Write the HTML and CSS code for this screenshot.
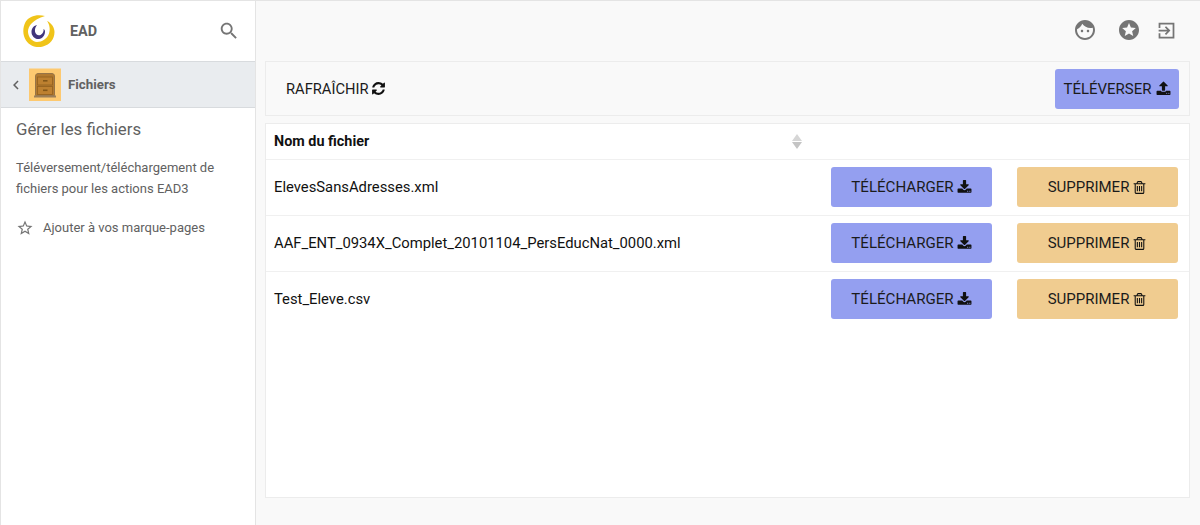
FILE: index.html
```html
<!DOCTYPE html>
<html lang="fr">
<head>
<meta charset="utf-8">
<title>Fichiers</title>
<link rel="stylesheet" href="styles.css">
</head>
<body>
<div class="app">
  <aside class="sidebar">
    <div class="brand">
      <svg class="logo" viewBox="0 0 32 32">
        <path d="M22 1C14 -1 6 1 2.500 7 -.5 12.500 -.5 20 3 25.500 7 31.500 14 33 20 31.500 27 29.500 31.500 24 31.500 17 31.500 12.500 28.500 8 24 6 26.500 9.500 27.500 14 26 18.500 24 24 19 27 14 27 9 26.500 5.500 22.500 5 17 5 11 9.500 5 22 1Z" fill="#f0c419"/>
        <path d="M14 10C10 11 8.500 14 8.500 17 8.500 21 12 24.500 16 24 19.500 23.500 22 20.500 22 16.500 22 15.500 21.500 14.500 20.500 14 21 16 20 18.500 17.500 20 15 21 12.500 19.500 12 16.500 11.700 14 12.500 12 14 10Z" fill="#41357c"/>
      </svg>
      <span class="brand-name">EAD</span>
      <svg class="search" viewBox="0 0 24 24"><path d="M15.5 14h-.79l-.28-.27C15.41 12.59 16 11.11 16 9.5 16 5.91 13.09 3 9.5 3S3 5.91 3 9.5 5.91 16 9.5 16c1.61 0 3.09-.59 4.23-1.57l.27.28v.79l5 4.99L20.49 19l-4.99-5zm-6 0C7.01 14 5 11.99 5 9.5S7.01 5 9.5 5 14 7.01 14 9.5 11.99 14 9.5 14z"/></svg>
    </div>
    <div class="crumb">
      <svg class="back" viewBox="0 0 24 24"><path d="M15.41 7.41L14 6l-6 6 6 6 1.41-1.41L10.83 12z"/></svg>
      <svg class="cabinet" viewBox="0 0 32 32">
        <rect width="32" height="33" fill="#fdc970"/>
        <path d="M6.500 7Q7 5 9 5H23Q25 5 25.500 7V27H6.500Z" fill="#b27a30" stroke="#977447" stroke-width="1"/>
        <rect x="5" y="27" width="22" height="2" fill="#9c7f58"/>
        <rect x="8.500" y="8.500" width="15" height="8" fill="#bd8030" stroke="#92601f" stroke-width=".8"/>
        <rect x="8.500" y="18" width="15" height="8" fill="#bd8030" stroke="#92601f" stroke-width=".8"/>
        <rect x="14" y="11.500" width="4.500" height="1.600" fill="#835618"/>
        <rect x="14" y="21" width="4.500" height="1.600" fill="#835618"/>
      </svg>
      <span class="crumb-label">Fichiers</span>
    </div>
    <div class="about">
      <h1 class="about-title">Gérer les fichiers</h1>
      <p class="about-text">Téléversement/téléchargement de fichiers pour les actions EAD3</p>
      <div class="bookmark">
        <svg class="star" viewBox="0 0 24 24"><path d="M22 9.24l-7.19-.62L12 2 9.19 8.63 2 9.24l5.46 4.73L5.820 21 12 17.27 18.18 21l-1.63-7.03L22 9.24zM12 15.4l-3.76 2.27 1-4.28-3.32-2.88 4.38-.38L12 6.1l1.71 4.04 4.38.38-3.32 2.88 1 4.28L12 15.4z"/></svg>
        <span>Ajouter à vos marque-pages</span>
      </div>
    </div>
  </aside>
  <main class="main">
    <div class="topbar">
      <svg class="top-icon" viewBox="0 0 24 24"><path d="M9 11.75c-.69 0-1.25.56-1.25 1.25s.56 1.25 1.25 1.25 1.25-.56 1.25-1.25-.56-1.25-1.25-1.25zm6 0c-.69 0-1.25.56-1.25 1.25s.56 1.25 1.25 1.25 1.25-.56 1.25-1.25-.56-1.25-1.25-1.25zM12 2C6.48 2 2 6.48 2 12s4.48 10 10 10 10-4.48 10-10S17.52 2 12 2zm0 18c-4.41 0-8-3.59-8-8 0-.29.02-.58.05-.86 2.36-1.05 4.23-2.98 5.21-5.37C11.07 8.33 14.05 10 17.42 10c.78 0 1.53-.09 2.25-.26.21.71.33 1.47.33 2.26 0 4.41-3.59 8-8 8z"/></svg>
      <svg class="top-icon" viewBox="0 0 24 24"><path d="M11.99 2C6.47 2 2 6.48 2 12s4.47 10 9.99 10C17.52 22 22 17.52 22 12S17.52 2 11.99 2zm4.24 16L12 15.45 7.77 18l1.12-4.81-3.730-3.23 4.92-.42L12 5l1.92 4.53 4.92.42-3.73 3.23L16.23 18z"/></svg>
      <svg class="exit-icon" viewBox="0 0 24 24"><path d="M10.09 15.59L11.5 17l5-5-5-5-1.41 1.41L12.67 11H3v2h9.67l-2.58 2.59zM21 3H3v6h2V5h14v14H5v-4H3v6h18V3z"/></svg>
    </div>
    <div class="toolbar">
      <button class="btn btn-plain">RAFRAÎCHIR <svg class="fa" viewBox="0 0 1792 1792"><path d="M1639 1056q0 5-1 7-64 268-268 434.5t-478 166.5q-146 0-282.5-55t-243.5-157l-129 129q-19 19-45 19t-45-19-19-45v-448q0-26 19-45t45-19h448q26 0 45 19t19 45-19 45l-137 137q71 66 161 102t187 36q134 0 250-65t186-179q11-17 53-117 8-23 30-23h192q13 0 22.5 9.5t9.5 22.5zm25-800v448q0 26-19 45t-45 19h-448q-26 0-45-19t-19-45 19-45l138-138q-148-137-349-137-134 0-250 65t-186 179q-11 17-53 117-8 23-30 23h-199q-13 0-22.5-9.5t-9.5-22.5v-7q65-268 270-434.5t480-166.5q146 0 284 55.5t245 156.5l130-129q19-19 45-19t45 19 19 45z"/></svg></button>
      <button class="btn btn-blue btn-upload">TÉLÉVERSER <svg class="fa" viewBox="0 0 1792 1792"><path d="M1344 1472q0-26-19-45t-45-19-45 19-19 45 19 45 45 19 45-19 19-45zm256 0q0-26-19-45t-45-19-45 19-19 45 19 45 45 19 45-19 19-45zm128-224v320q0 40-28 68t-68 28h-1472q-40 0-68-28t-28-68v-320q0-40 28-68t68-28h427q21 56 70.5 92t110.5 36h256q61 0 110.5-36t70.5-92h427q40 0 68 28t28 68zm-325-648q-17 40-59 40h-256v448q0 26-19 45t-45 19h-256q-26 0-45-19t-19-45v-448h-256q-42 0-59-40-17-39 14-69l448-448q18-19 45-19t45 19l448 448q31 30 14 69z"/></svg></button>
    </div>
    <div class="panel">
      <div class="row row-head">
        <span class="col-name">Nom du fichier</span>
        <span class="sort"><i class="sort-up"></i><i class="sort-down"></i></span>
      </div>
      <div class="row">
        <span class="col-name">ElevesSansAdresses.xml</span>
        <button class="btn btn-blue btn-get">TÉLÉCHARGER <svg class="fa" viewBox="0 0 1792 1792"><path d="M1344 1344q0-26-19-45t-45-19-45 19-19 45 19 45 45 19 45-19 19-45zm256 0q0-26-19-45t-45-19-45 19-19 45 19 45 45 19 45-19 19-45zm128-224v320q0 40-28 68t-68 28h-1472q-40 0-68-28t-28-68v-320q0-40 28-68t68-28h465l135 136q58 56 136 56t136-56l136-136h464q40 0 68 28t28 68zm-325-569q17 41-14 70l-448 448q-18 19-45 19t-45-19l-448-448q-31-29-14-70 17-39 59-39h256v-448q0-26 19-45t45-19h256q26 0 45 19t19 45v448h256q42 0 59 39z"/></svg></button>
        <button class="btn btn-orange btn-del">SUPPRIMER <svg class="fa" viewBox="0 0 1792 1792"><path d="M704 736v576q0 14-9 23t-23 9h-64q-14 0-23-9t-9-23v-576q0-14 9-23t23-9h64q14 0 23 9t9 23zm256 0v576q0 14-9 23t-23 9h-64q-14 0-23-9t-9-23v-576q0-14 9-23t23-9h64q14 0 23 9t9 23zm256 0v576q0 14-9 23t-23 9h-64q-14 0-23-9t-9-23v-576q0-14 9-23t23-9h64q14 0 23 9t9 23zm128 724v-948h-896v948q0 22 7 40.5t14.5 27 10.5 8.5h832q3 0 10.5-8.5t14.5-27 7-40.5zm-672-1076h448l-48-117q-7-9-17-11h-317q-10 2-17 11zm928 32v64q0 14-9 23t-23 9h-96v948q0 83-47 143.5t-113 60.5h-832q-66 0-113-58.5t-47-141.5v-952h-96q-14 0-23-9t-9-23v-64q0-14 9-23t23-9h309l70-167q15-37 54-63t79-26h320q40 0 79 26t54 63l70 167h309q14 0 23 9t9 23z"/></svg></button>
      </div>
      <div class="row">
        <span class="col-name">AAF_ENT_0934X_Complet_20101104_PersEducNat_0000.xml</span>
        <button class="btn btn-blue btn-get">TÉLÉCHARGER <svg class="fa" viewBox="0 0 1792 1792"><path d="M1344 1344q0-26-19-45t-45-19-45 19-19 45 19 45 45 19 45-19 19-45zm256 0q0-26-19-45t-45-19-45 19-19 45 19 45 45 19 45-19 19-45zm128-224v320q0 40-28 68t-68 28h-1472q-40 0-68-28t-28-68v-320q0-40 28-68t68-28h465l135 136q58 56 136 56t136-56l136-136h464q40 0 68 28t28 68zm-325-569q17 41-14 70l-448 448q-18 19-45 19t-45-19l-448-448q-31-29-14-70 17-39 59-39h256v-448q0-26 19-45t45-19h256q26 0 45 19t19 45v448h256q42 0 59 39z"/></svg></button>
        <button class="btn btn-orange btn-del">SUPPRIMER <svg class="fa" viewBox="0 0 1792 1792"><path d="M704 736v576q0 14-9 23t-23 9h-64q-14 0-23-9t-9-23v-576q0-14 9-23t23-9h64q14 0 23 9t9 23zm256 0v576q0 14-9 23t-23 9h-64q-14 0-23-9t-9-23v-576q0-14 9-23t23-9h64q14 0 23 9t9 23zm256 0v576q0 14-9 23t-23 9h-64q-14 0-23-9t-9-23v-576q0-14 9-23t23-9h64q14 0 23 9t9 23zm128 724v-948h-896v948q0 22 7 40.5t14.5 27 10.5 8.5h832q3 0 10.5-8.5t14.5-27 7-40.5zm-672-1076h448l-48-117q-7-9-17-11h-317q-10 2-17 11zm928 32v64q0 14-9 23t-23 9h-96v948q0 83-47 143.5t-113 60.5h-832q-66 0-113-58.5t-47-141.5v-952h-96q-14 0-23-9t-9-23v-64q0-14 9-23t23-9h309l70-167q15-37 54-63t79-26h320q40 0 79 26t54 63l70 167h309q14 0 23 9t9 23z"/></svg></button>
      </div>
      <div class="row">
        <span class="col-name">Test_Eleve.csv</span>
        <button class="btn btn-blue btn-get">TÉLÉCHARGER <svg class="fa" viewBox="0 0 1792 1792"><path d="M1344 1344q0-26-19-45t-45-19-45 19-19 45 19 45 45 19 45-19 19-45zm256 0q0-26-19-45t-45-19-45 19-19 45 19 45 45 19 45-19 19-45zm128-224v320q0 40-28 68t-68 28h-1472q-40 0-68-28t-28-68v-320q0-40 28-68t68-28h465l135 136q58 56 136 56t136-56l136-136h464q40 0 68 28t28 68zm-325-569q17 41-14 70l-448 448q-18 19-45 19t-45-19l-448-448q-31-29-14-70 17-39 59-39h256v-448q0-26 19-45t45-19h256q26 0 45 19t19 45v448h256q42 0 59 39z"/></svg></button>
        <button class="btn btn-orange btn-del">SUPPRIMER <svg class="fa" viewBox="0 0 1792 1792"><path d="M704 736v576q0 14-9 23t-23 9h-64q-14 0-23-9t-9-23v-576q0-14 9-23t23-9h64q14 0 23 9t9 23zm256 0v576q0 14-9 23t-23 9h-64q-14 0-23-9t-9-23v-576q0-14 9-23t23-9h64q14 0 23 9t9 23zm256 0v576q0 14-9 23t-23 9h-64q-14 0-23-9t-9-23v-576q0-14 9-23t23-9h64q14 0 23 9t9 23zm128 724v-948h-896v948q0 22 7 40.5t14.5 27 10.5 8.5h832q3 0 10.5-8.5t14.5-27 7-40.5zm-672-1076h448l-48-117q-7-9-17-11h-317q-10 2-17 11zm928 32v64q0 14-9 23t-23 9h-96v948q0 83-47 143.5t-113 60.5h-832q-66 0-113-58.5t-47-141.5v-952h-96q-14 0-23-9t-9-23v-64q0-14 9-23t23-9h309l70-167q15-37 54-63t79-26h320q40 0 79 26t54 63l70 167h309q14 0 23 9t9 23z"/></svg></button>
      </div>
    </div>
  </main>
</div>
</body>
</html>
```
FILE: styles.css
```css
* { box-sizing: border-box; }
html, body { margin: 0; height: 100%; }
body {
  font-family: Roboto, "Liberation Sans", sans-serif;
  color: #111;
  overflow: hidden;
}
.app {
  display: flex;
  height: 525px;
  border-top: 1px solid #e4e4e4;
  border-left: 1px solid #e4e4e4;
}
.sidebar {
  width: 255px;
  flex: none;
  background: #fff;
  border-right: 1px solid #e4e4e4;
}
.brand {
  height: 60px;
  display: flex;
  align-items: center;
  padding: 0 15px 0 22px;
}
.logo { width: 32px; height: 32px; flex: none; overflow: visible; }
.brand-name {
  margin-left: 15px;
  font-size: 14.400px;
  font-weight: 700;
  color: #616161;
  flex: 1;
}
.search { width: 22px; height: 22px; fill: #757575; }
.crumb {
  height: 47px;
  display: flex;
  align-items: center;
  background: #e9ecef;
  border-top: 1px solid #d8dbde;
  border-bottom: 1px solid #d8dbde;
  padding-left: 6px;
}
.back { width: 18px; height: 18px; fill: #616161; }
.cabinet { width: 32px; height: 33px; margin-left: 4px; flex: none; }
.crumb-label {
  margin-left: 7px;
  font-size: 13.300px;
  font-weight: 700;
  color: #616161;
}
.about { padding: 10px 15px; color: #616161; }
.about-title {
  margin: 0;
  font-size: 16.800px;
  line-height: 22px;
  font-weight: 400;
}
.about-text {
  margin: 17px 0 0;
  font-size: 13px;
  line-height: 21px;
}
.bookmark {
  display: flex;
  align-items: center;
  margin-top: 20px;
  font-size: 13px;
  line-height: 18px;
}
.star { width: 18px; height: 18px; fill: #757575; margin: 0 9px 0 0; }
.main {
  flex: 1;
  min-width: 0;
  background: #f9f9f9;
  padding: 0 10px 0 9px;
}
.topbar {
  height: 60px;
  display: flex;
  justify-content: flex-end;
  align-items: center;
  padding: 0 13px 2px 0;
}
.top-icon { width: 24px; height: 24px; fill: #757575; margin-right: 20px; }
.top-icon + .top-icon { margin-right: 15px; }
.exit-icon { width: 21px; height: 21px; fill: #757575; }
.toolbar {
  height: 55px;
  display: flex;
  justify-content: space-between;
  align-items: center;
  background: #f9f9f9;
  border: 1px solid #ececec;
  padding: 0 10px 0 12px;
}
.btn {
  height: 40px;
  border: 0;
  border-radius: 3px;
  font-family: inherit;
  font-size: 15px;
  color: #1b1b1b;
  padding: 0;
  display: flex;
  align-items: center;
  justify-content: center;
  gap: 3px;
  white-space: nowrap;
}
.btn-plain { background: none; padding: 0 8px; font-size: 14.700px; }
.btn-blue { background: #949ff0; }
.btn-orange { background: #f0cc90; }
.btn-upload { width: 124px; gap: 4px; }
.btn-get { width: 161px; flex: none; font-size: 15.100px; }
.btn-del { width: 161px; flex: none; margin-left: 25px; }
.fa { width: 15px; height: 15px; fill: #111; flex: none; }
.panel {
  margin-top: 7px;
  height: 375px;
  background: #fff;
  border: 1px solid #ececec;
}
.row {
  height: 56px;
  display: flex;
  align-items: center;
  padding: 0 11px 1px 8px;
  font-size: 14.800px;
  border-bottom: 1px solid #f0f0f0;
}
.row:last-child { border-bottom-color: transparent; }
.row-head {
  height: 36px;
  font-size: 14.400px;
  font-weight: 700;
}
.col-name { flex: 1; min-width: 0; }
.sort {
  display: flex;
  flex-direction: column;
  gap: 1px;
  margin-right: 376px;
}
.sort-up, .sort-down {
  display: block;
  width: 0;
  height: 0;
  border-left: 5px solid transparent;
  border-right: 5px solid transparent;
}
.sort-up { border-bottom: 7px solid #d6d6d6; }
.sort-down { border-top: 7px solid #c4c4c4; }
```
